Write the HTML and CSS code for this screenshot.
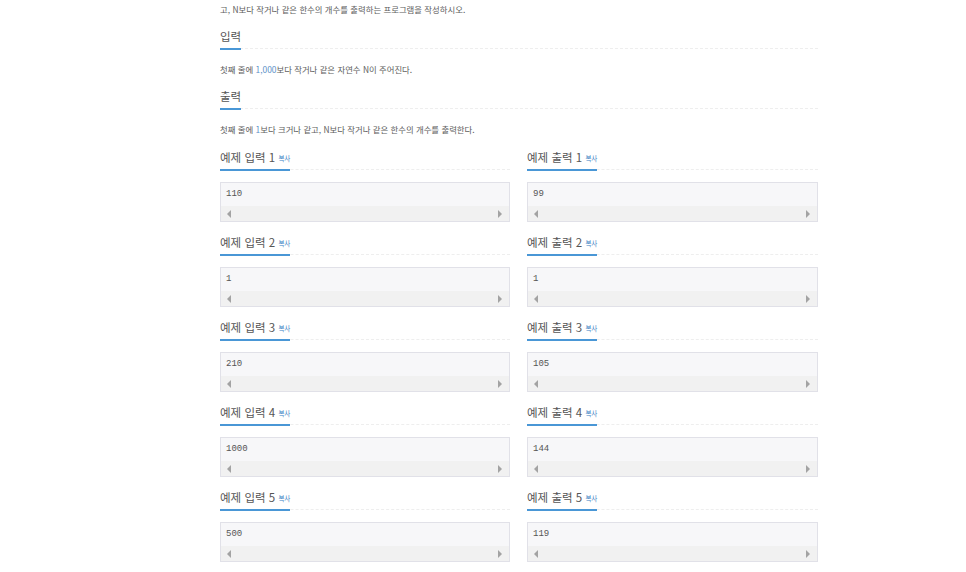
FILE: index.html
```html
<!DOCTYPE html>
<html lang="ko">
<head>
<meta charset="utf-8">
<link rel="stylesheet" href="styles.css">
</head>
<body>
<div class="container">
  <p class="text">고, N보다 작거나 같은 한수의 개수를 출력하는 프로그램을 작성하시오.</p>

  <div class="headline"><h2><span>입력</span></h2></div>
  <p class="text">첫째 줄에 <span class="num">1,000</span>보다 작거나 같은 자연수 N이 주어진다.</p>

  <div class="headline"><h2><span>출력</span></h2></div>
  <p class="text">첫째 줄에 <span class="num">1</span>보다 크거나 같고, N보다 작거나 같은 한수의 개수를 출력한다.</p>

  <div class="samples">
    <div class="sample">
      <div class="headline"><h2><span>예제 입력 1 <a class="copy">복사</a></span></h2></div>
      <div class="box"><pre>110</pre><div class="scroll"><i class="left"></i><i class="right"></i></div></div>
    </div>
    <div class="sample">
      <div class="headline"><h2><span>예제 출력 1 <a class="copy">복사</a></span></h2></div>
      <div class="box"><pre>99</pre><div class="scroll"><i class="left"></i><i class="right"></i></div></div>
    </div>
    <div class="sample">
      <div class="headline"><h2><span>예제 입력 2 <a class="copy">복사</a></span></h2></div>
      <div class="box"><pre>1</pre><div class="scroll"><i class="left"></i><i class="right"></i></div></div>
    </div>
    <div class="sample">
      <div class="headline"><h2><span>예제 출력 2 <a class="copy">복사</a></span></h2></div>
      <div class="box"><pre>1</pre><div class="scroll"><i class="left"></i><i class="right"></i></div></div>
    </div>
    <div class="sample">
      <div class="headline"><h2><span>예제 입력 3 <a class="copy">복사</a></span></h2></div>
      <div class="box"><pre>210</pre><div class="scroll"><i class="left"></i><i class="right"></i></div></div>
    </div>
    <div class="sample">
      <div class="headline"><h2><span>예제 출력 3 <a class="copy">복사</a></span></h2></div>
      <div class="box"><pre>105</pre><div class="scroll"><i class="left"></i><i class="right"></i></div></div>
    </div>
    <div class="sample">
      <div class="headline"><h2><span>예제 입력 4 <a class="copy">복사</a></span></h2></div>
      <div class="box"><pre>1000</pre><div class="scroll"><i class="left"></i><i class="right"></i></div></div>
    </div>
    <div class="sample">
      <div class="headline"><h2><span>예제 출력 4 <a class="copy">복사</a></span></h2></div>
      <div class="box"><pre>144</pre><div class="scroll"><i class="left"></i><i class="right"></i></div></div>
    </div>
    <div class="sample">
      <div class="headline"><h2><span>예제 입력 5 <a class="copy">복사</a></span></h2></div>
      <div class="box"><pre>500</pre><div class="scroll"><i class="left"></i><i class="right"></i></div></div>
    </div>
    <div class="sample">
      <div class="headline"><h2><span>예제 출력 5 <a class="copy">복사</a></span></h2></div>
      <div class="box"><pre>119</pre><div class="scroll"><i class="left"></i><i class="right"></i></div></div>
    </div>
  </div>
</div>
</body>
</html>
```

FILE: styles.css
```css
html, body {
  margin: 0;
  padding: 0;
  background: #ffffff;
}
body {
  font-family: "Noto Sans CJK KR", "Noto Sans", sans-serif;
  color: #555555;
}
.container {
  width: 598px;
  margin: 0 0 0 220px;
  padding-top: 2px;
}
.text {
  margin: 0;
  font-size: 8.4px;
  line-height: 14px;
  color: #5c5c5c;
}
.num {
  color: #5b8fc7;
}
.headline {
  border-bottom: 1px dashed #eeeeee;
  margin: 12px 0 13px;
}
.headline h2 {
  margin: 0;
  font-size: 11.5px;
  font-weight: 400;
  line-height: 16px;
  height: 20px;
}
.headline h2 span {
  display: inline-block;
  border-bottom: 2px solid #4a97d6;
  margin-bottom: -1px;
  color: #555555;
  box-sizing: border-box;
  height: 22px;
  padding-bottom: 4px;
}
.copy {
  font-size: 6.5px;
  color: #3a82c4;
  vertical-align: 1px;
}
.samples {
  display: grid;
  grid-template-columns: 290px 291px;
  column-gap: 17px;
  margin-top: 1px;
}
.sample .headline {
  margin: 12px 0 12px;
}
.box {
  border: 1px solid #e1e1e8;
  background: #f7f7f9;
  height: 38px;
  display: flex;
  flex-direction: column;
}
.box pre {
  margin: 0;
  flex: 1;
  padding: 5px 0 0 5px;
  font-family: "Liberation Mono", "DejaVu Sans Mono", monospace;
  font-size: 9px;
  line-height: 13px;
  color: #555555;
}
.scroll {
  height: 15px;
  background: #f1f1f1;
  display: flex;
  justify-content: space-between;
  align-items: center;
  padding: 0 7px 0 6px;
}
.scroll i {
  width: 0;
  height: 0;
  border-top: 4px solid transparent;
  border-bottom: 4px solid transparent;
}
.scroll .left {
  border-right: 4px solid #a3a3a3;
}
.scroll .right {
  border-left: 4px solid #a3a3a3;
}
```
